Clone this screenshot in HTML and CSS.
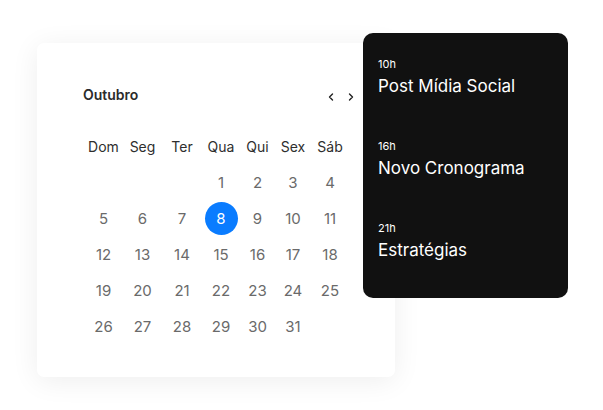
FILE: index.html
```html
<!DOCTYPE html>
<html lang="pt">
<head>
<meta charset="utf-8">
<link rel="stylesheet" href="styles.css">
</head>
<body>
<div class="stage">
  <div class="card">
    <div class="title-row">
      <span class="month">Outubro</span>
      <div class="nav">
        <svg class="chev" width="10" height="10" viewBox="0 0 10 10"><path d="M6.5 2 L3.5 5 L6.5 8" fill="none" stroke="#222" stroke-width="1.4" stroke-linecap="round" stroke-linejoin="round"/></svg>
        <svg class="chev" width="10" height="10" viewBox="0 0 10 10"><path d="M3.5 2 L6.5 5 L3.5 8" fill="none" stroke="#222" stroke-width="1.4" stroke-linecap="round" stroke-linejoin="round"/></svg>
      </div>
    </div>
    <div class="grid">
      <span class="head">Dom</span><span class="head">Seg</span><span class="head">Ter</span><span class="head">Qua</span><span class="head">Qui</span><span class="head">Sex</span><span class="head">Sáb</span>
      <span></span><span></span><span></span><span class="d">1</span><span class="d">2</span><span class="d">3</span><span class="d">4</span>
      <span class="d">5</span><span class="d">6</span><span class="d">7</span><span class="d sel"><i>8</i></span><span class="d">9</span><span class="d">10</span><span class="d">11</span>
      <span class="d">12</span><span class="d">13</span><span class="d">14</span><span class="d">15</span><span class="d">16</span><span class="d">17</span><span class="d">18</span>
      <span class="d">19</span><span class="d">20</span><span class="d">21</span><span class="d">22</span><span class="d">23</span><span class="d">24</span><span class="d">25</span>
      <span class="d">26</span><span class="d">27</span><span class="d">28</span><span class="d">29</span><span class="d">30</span><span class="d">31</span><span></span>
    </div>
  </div>
  <div class="events">
    <div class="event"><span class="time">10h</span><span class="name">Post Mídia Social</span></div>
    <div class="event"><span class="time">16h</span><span class="name">Novo Cronograma</span></div>
    <div class="event"><span class="time">21h</span><span class="name">Estratégias</span></div>
  </div>
</div>
</body>
</html>
```

FILE: styles.css
```css
html, body {
  margin: 0;
  padding: 0;
  background: #ffffff;
  font-family: Inter, "Noto Sans", sans-serif;
}
.stage {
  position: relative;
  width: 603px;
  height: 410px;
  padding: 43px 0 0 37px;
  box-sizing: border-box;
}
.card {
  width: 358px;
  height: 334px;
  box-sizing: border-box;
  background: #fff;
  border-radius: 7px;
  box-shadow: 0 4px 28px rgba(0, 0, 0, 0.07);
  padding: 39px 0 0 46px;
}
.title-row {
  width: 273px;
  height: 24px;
  display: flex;
  align-items: center;
  justify-content: space-between;
}
.month {
  font-size: 14px;
  font-weight: 600;
  color: #2b2b2b;
}
.nav {
  display: flex;
  gap: 10px;
  padding-top: 6px;
}
.chev { display: block; }
.grid {
  margin-top: 22px;
  margin-left: 1px;
  display: grid;
  grid-template-columns: 39px 39px 40px 38px 35px 36px 38px;
  grid-auto-rows: 36px;
}
.grid span {
  display: flex;
  align-items: center;
  justify-content: center;
}
.head {
  font-size: 14px;
  color: #2e2e2e;
}
.d {
  font-size: 15px;
  color: #6a6a6a;
}
.sel i {
  font-style: normal;
  width: 33px;
  height: 33px;
  border-radius: 50%;
  background: #0a7cff;
  color: #fff;
  display: flex;
  align-items: center;
  justify-content: center;
}
.events {
  position: absolute;
  left: 363px;
  top: 33px;
  width: 205px;
  height: 265px;
  box-sizing: border-box;
  background: #111111;
  border-radius: 10px;
  padding: 24px 0 0 15px;
  display: flex;
  flex-direction: column;
  gap: 42px;
}
.event {
  display: flex;
  flex-direction: column;
  gap: 4px;
  color: #fff;
}
.time {
  font-size: 11px;
  line-height: 14px;
}
.name {
  font-size: 17px;
  line-height: 22px;
}
```
